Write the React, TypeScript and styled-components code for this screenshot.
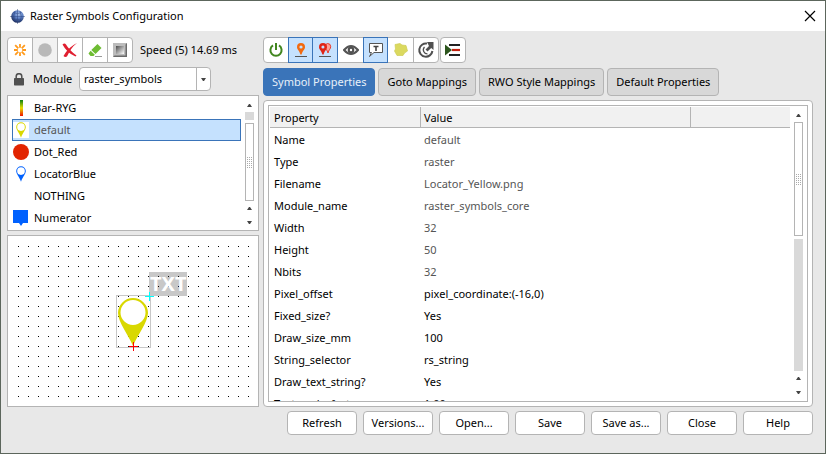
import React from "react";
import styled, { createGlobalStyle, css } from "styled-components";

const Global = createGlobalStyle`
  *, *::before, *::after { box-sizing: border-box; }
  html, body, #root { height: 100%; }
  body { margin: 0; overflow: hidden; }
  body, button, select, table { font: 11px/16px "Noto Sans", "Open Sans", sans-serif; color: #000; }
`;

const Dialog = styled.main`
  height: 100%;
  display: flex;
  flex-direction: column;
  background: #e8e8e8;
  border: 1px solid #5c665c;
`;

const TitleBar = styled.header`
  flex: none;
  height: 30px;
  display: flex;
  align-items: center;
  gap: 5px;
  padding: 0 9px;
  background: #fff;
  svg { flex: none; }
`;

const Title = styled.h1`
  flex: 1;
  margin: 0;
  font: 11px/16px "Noto Sans", "Open Sans", sans-serif;
  color: #000;
`;

const CloseButton = styled.button`
  display: flex;
  padding: 0;
  border: 0;
  background: none;
`;

const Body = styled.div`
  flex: 1;
  min-height: 0;
  display: flex;
  gap: 4px;
  padding: 6px 12px 4px 6px;
`;

const LeftPane = styled.section`
  flex: none;
  width: 252px;
  display: flex;
  flex-direction: column;
  gap: 4px;
`;

const RightPane = styled.section`
  flex: 1;
  min-width: 0;
  display: flex;
  flex-direction: column;
  gap: 4px;
`;

const ToolRow = styled.div`
  flex: none;
  display: flex;
  align-items: center;
  height: 26px;
`;

const ToolGroup = styled.div`
  display: flex;
  height: 26px;
  border: 1px solid #b4b4b4;
  border-radius: 4px;
  background: #fff;
  margin-right: 1px;
`;

const ToolButton = styled.button<{ $on?: boolean; $off?: boolean }>`
  width: 25px;
  height: 24px;
  display: flex;
  align-items: center;
  justify-content: center;
  padding: 0;
  border: 0;
  border-left: 1px solid #b4b4b4;
  background: none;
  &:first-child { border-left: 0; width: 24px; }
  ${(p) => p.$off && css`background: #f2f2f2;`}
  ${(p) =>
    p.$on &&
    css`
      width: 26px;
      height: 26px;
      margin-top: -1px;
      background: #c5e1fe;
      border: 1px solid #3a74b9;
      & + button { border-left: 0; width: 24px; }
      & + & { width: 25px; }
    `}
`;

const Speed = styled.span`
  margin-left: 6px;
  white-space: nowrap;
`;

const ModuleRow = styled.div`
  flex: none;
  height: 24px;
  display: flex;
  align-items: center;
  padding-left: 7px;
  label { margin-left: 9px; width: 46px; }
`;

const SelectBox = styled.div`
  width: 132px;
  height: 24px;
  display: flex;
  align-items: center;
  border: 1px solid #b4b4b4;
  border-radius: 4px;
  background: #fff;
  overflow: hidden;
  select {
    flex: 1;
    min-width: 0;
    height: 22px;
    padding: 0 4px;
    border: 0;
    border-right: 1px solid #b4b4b4;
    background: none;
    appearance: none;
  }
  svg { flex: none; margin: 0 4px; }
`;

const SymbolBox = styled.div`
  flex: none;
  height: 136px;
  display: flex;
  padding: 0 4px;
  background: #fff;
  border: 1px solid #b4b4b4;
`;

const SymbolList = styled.ul`
  flex: 1;
  margin: 0;
  padding: 1px 0 0;
  list-style: none;
`;

const SymbolItem = styled.button<{ $selected?: boolean }>`
  width: 100%;
  height: 22px;
  display: flex;
  align-items: center;
  gap: 5px;
  padding: 0;
  border: 1px solid ${(p) => (p.$selected ? "#3a74b9" : "transparent")};
  background: ${(p) => (p.$selected ? "#c5e1fe" : "none")};
  color: ${(p) => (p.$selected ? "#555" : "#000")};
  text-align: left;
  svg { flex: none; }
`;

const ScrollBar = styled.div`
  flex: none;
  width: 9px;
  display: flex;
  flex-direction: column;
  margin-left: 4px;
  padding: 2px 0;
`;

const ArrowBox = styled.span<{ $h: number }>`
  flex: none;
  height: ${(p) => p.$h}px;
  display: flex;
  align-items: center;
  justify-content: center;
`;

const Trough = styled.div<{ $size?: number }>`
  flex: ${(p) => (p.$size ? `0 0 ${p.$size}px` : "1")};
  margin: ${(p) => (p.$size ? "0 0 3px" : "3px 0 0")};
  background: #d9d9d9;
`;

const Thumb = styled.div<{ $size: number; $grow?: boolean }>`
  flex: ${(p) => (p.$grow ? 1 : 0)} 0 ${(p) => p.$size}px;
  display: flex;
  align-items: center;
  justify-content: center;
  border: 1px solid #b4b4b4;
  background: #fff;
`;

const Preview = styled.div`
  flex: 1;
  min-height: 0;
  border: 1px solid #b4b4b4;
  background: #fff;
  overflow: hidden;
  svg { display: block; }
`;

const Tabs = styled.div`
  flex: none;
  display: flex;
  gap: 3px;
  margin-top: 1px;
`;

const Tab = styled.button<{ $active?: boolean }>`
  height: 28px;
  padding: 0 8px;
  border: 1px solid ${(p) => (p.$active ? "#3a74b9" : "#b4b4b4")};
  border-radius: 4px;
  background: ${(p) => (p.$active ? "#3a74b9" : "#d8d8d8")};
  color: ${(p) => (p.$active ? "#e8f0fa" : "#000")};
  white-space: nowrap;
`;

const Panel = styled.div`
  flex: 1;
  min-height: 0;
  display: flex;
  padding: 4px;
  border: 1px solid #b4b4b4;
  border-radius: 4px;
  background: #fff;
`;

const TableFrame = styled.div`
  flex: 1;
  min-width: 0;
  display: flex;
  padding: 1px 4px 0 1px;
  border: 1px solid #b4b4b4;
`;

const TableClip = styled.div`
  flex: 1;
  overflow: hidden;
`;

const PropTable = styled.table`
  width: 100%;
  table-layout: fixed;
  border-collapse: separate;
  border-spacing: 0;
  th {
    height: 21px;
    padding: 2px 0 0 4px;
    background: #f1f1f1;
    border-bottom: 1px solid #b4b4b4;
    text-align: left;
    font-weight: 400;
  }
  th + th { border-left: 1px solid #b4b4b4; padding-left: 3px; }
  td { height: 22px; padding: 0 0 0 4px; }
  tbody::before { content: ""; display: block; height: 1px; }
`;

const ValueCell = styled.td<{ $dim?: boolean }>`
  color: ${(p) => (p.$dim ? "#555" : "#000")};
`;

const Footer = styled.footer`
  flex: none;
  display: flex;
  justify-content: flex-end;
  gap: 6px;
  padding: 0 12px 18px;
`;

const PushButton = styled.button`
  width: 70px;
  height: 24px;
  padding: 0;
  border: 1px solid #b4b4b4;
  border-radius: 4px;
  background: #fff;
`;

const Arrow = ({ down }: { down?: boolean }) => (
  <svg width="5" height="3" viewBox="0 0 5 3">
    <path d={down ? "M0 0H5L3 3H2Z" : "M0 3H5L3 0H2Z"} fill="#444" />
  </svg>
);

const Grip = () => (
  <svg width="5" height="11" viewBox="0 0 5 11" shapeRendering="crispEdges">
    {[0, 2, 4, 6, 8, 10].map((y) =>
      [0, 2, 4].map((x) => <rect key={`${x}-${y}`} x={x} y={y} width="1" height="1" fill="#aaa" />)
    )}
  </svg>
);

const Globe = () => (
  <svg width="15" height="15" viewBox="0 0 15 15">
    <defs>
      <radialGradient id="globe" cx=".6" cy=".3" r=".75">
        <stop offset="0" stopColor="#a9c0e8" />
        <stop offset=".45" stopColor="#5b7fc4" />
        <stop offset="1" stopColor="#14224f" />
      </radialGradient>
    </defs>
    <path d="M7.5 0V15M0 7.5H15" stroke="#9aa4b8" />
    <circle cx="7.5" cy="7.5" r="6.3" fill="url(#globe)" />
    <path d="M7.5 1.5V13.5M1.5 7.5H13.500M3.500 3.500Q7.500 6 11.500 3.500M3.500 11.500Q7.500 9 11.500 11.500M5 2Q2.500 7.500 5 13M10 2Q12.500 7.500 10 13" fill="none" stroke="#2d4785" strokeWidth=".5" />
  </svg>
);

const Spark = () => (
  <svg width="14" height="14" viewBox="0 0 14 14" stroke="#ff9a1c" strokeWidth="1.800">
    <path d="M7 1V4.800M7 9.200V13M1 7H4.800M9.200 7H13M2.200 2.200L5.300 5.300M8.700 8.700L11.800 11.800M11.800 2.200L8.700 5.300M5.300 8.700L2.200 11.800" />
  </svg>
);

const Cross = () => (
  <svg width="18" height="18" viewBox="0 0 18 18" fill="#e01f30">
    <path d="M1.500 3.500Q3.500 1.500 5 3.500Q8.500 9.500 15.500 14.500L14.500 15.500Q6 12 1.500 3.500Z" />
    <path d="M16 2Q10 6.500 6 15.500Q4 16.500 2.500 15Q7.500 6 16 2Z" />
  </svg>
);

const Eraser = () => (
  <svg width="16" height="16" viewBox="0 0 16 16">
    <path d="M10.500 2L14.500 6L8.500 12L4.300 8Z" fill="#6ebc33" />
    <path d="M3.600 8.700L7.800 12.700L6.500 14H3.500L1.500 11.500Z" fill="#6ebc33" />
    <path d="M8 14.500H15" stroke="#999" />
  </svg>
);

const Bevel = () => (
  <svg width="16" height="16" viewBox="0 0 16 16">
    <defs>
      <linearGradient id="bevel" x2="1" y2="1">
        <stop stopColor="#4a4a4a" />
        <stop offset="1" stopColor="#fff" />
      </linearGradient>
    </defs>
    <path d="M1 1H15V15H1Z" fill="#bcbcbc" />
    <path d="M15 1V15H1L2.500 13.500H13.500V2.500Z" fill="#6a6a6a" />
    <path d="M4 4H12V12H4Z" fill="url(#bevel)" />
  </svg>
);

const Lock = () => (
  <svg width="10" height="13" viewBox="0 0 10 13">
    <path d="M2.200 6V3.500A2.800 2.800 0 0 1 7.800 3.500V6" fill="none" stroke="#505050" strokeWidth="1.500" />
    <rect y="5" width="10" height="7.500" rx=".7" fill="#505050" />
  </svg>
);

const Power = () => (
  <svg width="16" height="16" viewBox="0 0 16 16" fill="none" stroke="#41861f" strokeWidth="2">
    <path d="M5 3.400A5.600 5.600 0 1 0 11 3.400M8 1V8" />
  </svg>
);

const Pin = ({ double }: { double?: boolean }) => (
  <svg width="16" height="18" viewBox="0 0 16 18">
    {double && (
      <path d="M10.500 2.500A3.200 3.200 0 0 1 13.700 5.700C13.700 8 11.500 9 11 12C10.500 9 8 8 8 5.700A3.200 3.200 0 0 1 10.500 2.500Z" fill="#ff9f97" stroke="#e83a2a" />
    )}
    <path
      transform={double ? "translate(-2 0)" : undefined}
      fill={double ? "#e02417" : "#f26a10"}
      fillRule="evenodd"
      d="M8 2A4 4 0 0 1 12 6C12 8.500 9.500 9.500 8.600 13.500H7.400C6.500 9.500 4 8.500 4 6A4 4 0 0 1 8 2ZM8 4.400A1.600 1.600 0 1 0 8 7.600A1.600 1.600 0 0 0 8 4.400Z"
    />
    <path d="M2 15.500H14" stroke="#555" />
  </svg>
);

const Eye = () => (
  <svg width="16" height="12" viewBox="0 0 16 12">
    <path d="M1 6Q8 -2 15 6Q8 14 1 6Z" fill="#fff" stroke="#555" strokeWidth="2" />
    <circle cx="8" cy="6" r="3.300" fill="#505050" />
    <circle cx="8" cy="6" r="1.200" fill="#fff" />
  </svg>
);

const TextBubble = () => (
  <svg width="16" height="16" viewBox="0 0 16 16">
    <path d="M1.500 1.500H14.500V10.500H6L1.500 14.500L3.500 10.500H1.500Z" fill="#fff" stroke="#555" />
    <path d="M5.500 4.500H10.500M8 4.500V9" stroke="#444" strokeWidth="1.600" />
  </svg>
);

const Region = () => (
  <svg width="16" height="16" viewBox="0 0 16 16">
    <path d="M2 2.500L7 1.500L9 3L13 3.500L14.500 9L11.500 11L10 13.500L4 13.500L1.500 9L2.500 7Z" fill="#dbd95f" stroke="#cfcd55" strokeWidth=".7" />
  </svg>
);

const Reload = () => (
  <svg width="18" height="18" viewBox="0 0 18 18" fill="none" stroke="#505050">
    <path d="M10 2.600A6.600 6.600 0 1 0 15.400 10" strokeWidth="2" />
    <path d="M7.500 6A4 4 0 0 0 10.500 12.800" strokeWidth="1.300" />
    <path d="M10 1H16.500V9L14.200 7L10.500 10.500L8.500 8.500L12 5Z" fill="#505050" stroke="none" />
  </svg>
);

const Indent = () => (
  <svg width="16" height="14" viewBox="0 0 16 14">
    <path d="M4 2H15M4 12H15" stroke="#222" strokeWidth="1.800" />
    <path d="M7 7H15" stroke="#c4200f" strokeWidth="2.200" />
    <path d="M0 1.500L7 7L0 12.500Z" fill="#2d561d" />
  </svg>
);

const LocatorShape = ({ color }: { color: string }) => (
  <path
    fillRule="evenodd"
    fill={color}
    d="M16 1A15 15 0 0 1 31 16C31 25 22 33 16 49C10 33 1 25 1 16A15 15 0 0 1 16 1ZM16 4A12 12 0 1 0 16 28A12 12 0 0 0 16 4Z"
  />
);

const icons: Record<string, React.ReactNode> = {
  "Bar-RYG": (
    <svg width="16" height="16" viewBox="0 0 16 16">
      <defs>
        <linearGradient id="ryg" x2="0" y2="1">
          <stop stopColor="#087f10" />
          <stop offset=".5" stopColor="#e8e000" />
          <stop offset="1" stopColor="#f01000" />
        </linearGradient>
      </defs>
      <rect x="7" width="3" height="16" fill="url(#ryg)" />
    </svg>
  ),
  default: (
    <svg width="16" height="16" viewBox="-9 0 50 50">
      <path d="M-9 0H41V50H-9Z" fill="#fff" />
      <LocatorShape color="#d9d800" />
    </svg>
  ),
  Dot_Red: (
    <svg width="16" height="16" viewBox="0 0 16 16"><circle cx="8" cy="8" r="8" fill="#e22400" /></svg>
  ),
  LocatorBlue: (
    <svg width="16" height="16" viewBox="-9 0 50 50"><LocatorShape color="#0061fe" /></svg>
  ),
  NOTHING: <svg width="16" height="16" />,
  Numerator: (
    <svg width="16" height="16" viewBox="0 0 16 16"><path d="M0 0H15V13H10L8 16L6 13H0Z" fill="#0061fe" /></svg>
  ),
};

const rows: [string, string, boolean][] = [
  ["Name", "default", true],
  ["Type", "raster", true],
  ["Filename", "Locator_Yellow.png", true],
  ["Module_name", "raster_symbols_core", true],
  ["Width", "32", true],
  ["Height", "50", true],
  ["Nbits", "32", true],
  ["Pixel_offset", "pixel_coordinate:(-16,0)", false],
  ["Fixed_size?", "Yes", false],
  ["Draw_size_mm", "100", false],
  ["String_selector", "rs_string", false],
  ["Draw_text_string?", "Yes", false],
  ["Text_scale_factor", "1.00", false],
];

const PreviewText = styled.text`
  font: bold 20px "Noto Sans", sans-serif;
  fill: #fff;
`;

const SymbolPreview = () => (
  <svg width="250" height="170" viewBox="8 236 250 170" shapeRendering="crispEdges" role="img" aria-label="Symbol preview">
    <rect x="149" y="272" width="38" height="24" fill="#c8c8c8" />
    <rect x="116.500" y="295.500" width="34" height="52" fill="#fff" stroke="#c8c8c8" />
    {Array.from({ length: 16 }, (_, r) =>
      Array.from({ length: 24 }, (_, c) => (
        <rect key={`${r}-${c}`} x={18 + c * 10} y={246 + r * 10} width="1" height="1" />
      ))
    )}
    <g transform="translate(117 297)" shapeRendering="auto">
      <circle cx="16" cy="16" r="13" fill="#fff" />
      <path
        fillRule="evenodd"
        fill="#d9d800"
        d="M16 1A15 15 0 0 1 31 16C30.500 26 21 37 16 49C11 37 1.500 26 1 16A15 15 0 0 1 16 1ZM16 3A12.500 12.500 0 1 0 16 28A12.500 12.500 0 0 0 16 3Z"
      />
    </g>
    <PreviewText x="150" y="291">TXT</PreviewText>
    <path d="M145 296.500H154M149.500 292V301" stroke="#0ff" />
    <path d="M129 346.500H138M133.500 342V351" stroke="#f00" />
  </svg>
);

export default function App() {
  return (
    <>
      <Global />
      <Dialog>
        <TitleBar>
          <Globe />
          <Title>Raster Symbols Configuration</Title>
          <CloseButton aria-label="Close window">
            <svg width="12" height="12" viewBox="0 0 12 12"><path d="M1 1L11 11M11 1L1 11" stroke="#000" strokeWidth="1.200" /></svg>
          </CloseButton>
        </TitleBar>
        <Body>
          <LeftPane>
            <ToolRow>
              <ToolGroup>
                <ToolButton aria-label="New"><Spark /></ToolButton>
                <ToolButton aria-label="Record" $off>
                  <svg width="14" height="14" viewBox="0 0 14 14"><circle cx="7" cy="7" r="6.800" fill="#b9b9b9" /></svg>
                </ToolButton>
                <ToolButton aria-label="Delete"><Cross /></ToolButton>
                <ToolButton aria-label="Erase"><Eraser /></ToolButton>
                <ToolButton aria-label="Bevel"><Bevel /></ToolButton>
              </ToolGroup>
              <Speed>Speed (5) 14.69 ms</Speed>
            </ToolRow>
            <ModuleRow>
              <Lock />
              <label htmlFor="module">Module</label>
              <SelectBox>
                <select id="module"><option>raster_symbols</option></select>
                <Arrow down />
              </SelectBox>
            </ModuleRow>
            <SymbolBox>
              <SymbolList>
                {Object.entries(icons).map(([name, icon]) => (
                  <li key={name}>
                    <SymbolItem $selected={name === "default"}>{icon}{name}</SymbolItem>
                  </li>
                ))}
              </SymbolList>
              <ScrollBar>
                <ArrowBox $h={14}><Arrow /></ArrowBox>
                <Trough $size={8} />
                <Thumb $size={60} $grow><Grip /></Thumb>
                <ArrowBox $h={15}><Arrow /></ArrowBox>
                <ArrowBox $h={12}><Arrow down /></ArrowBox>
              </ScrollBar>
            </SymbolBox>
            <Preview><SymbolPreview /></Preview>
          </LeftPane>
          <RightPane>
            <ToolRow>
              <ToolGroup>
                <ToolButton aria-label="Power"><Power /></ToolButton>
                <ToolButton aria-label="Show pin" $on><Pin /></ToolButton>
                <ToolButton aria-label="Show pins" $on><Pin double /></ToolButton>
                <ToolButton aria-label="Visibility"><Eye /></ToolButton>
                <ToolButton aria-label="Text" $on><TextBubble /></ToolButton>
                <ToolButton aria-label="Area"><Region /></ToolButton>
                <ToolButton aria-label="Rotate"><Reload /></ToolButton>
              </ToolGroup>
              <ToolGroup>
                <ToolButton aria-label="Indent"><Indent /></ToolButton>
              </ToolGroup>
            </ToolRow>
            <Tabs>
              <Tab $active>Symbol Properties</Tab>
              <Tab>Goto Mappings</Tab>
              <Tab>RWO Style Mappings</Tab>
              <Tab>Default Properties</Tab>
            </Tabs>
            <Panel>
              <TableFrame>
                <TableClip>
                  <PropTable>
                    <colgroup>
                      <col width="150" />
                      <col width="270" />
                      <col />
                    </colgroup>
                    <thead>
                      <tr><th>Property</th><th>Value</th><th aria-label="Notes" /></tr>
                    </thead>
                    <tbody>
                      {rows.map(([name, value, dim]) => (
                        <tr key={name}><td>{name}</td><ValueCell $dim={dim}>{value}</ValueCell><td /></tr>
                      ))}
                    </tbody>
                  </PropTable>
                </TableClip>
                <ScrollBar>
                  <ArrowBox $h={13}><Arrow /></ArrowBox>
                  <Thumb $size={114}><Grip /></Thumb>
                  <Trough />
                  <ArrowBox $h={15}><Arrow /></ArrowBox>
                  <ArrowBox $h={13}><Arrow down /></ArrowBox>
                </ScrollBar>
              </TableFrame>
            </Panel>
          </RightPane>
        </Body>
        <Footer>
          {["Refresh", "Versions...", "Open...", "Save", "Save as...", "Close", "Help"].map((t) => (
            <PushButton key={t}>{t}</PushButton>
          ))}
        </Footer>
      </Dialog>
    </>
  );
}
